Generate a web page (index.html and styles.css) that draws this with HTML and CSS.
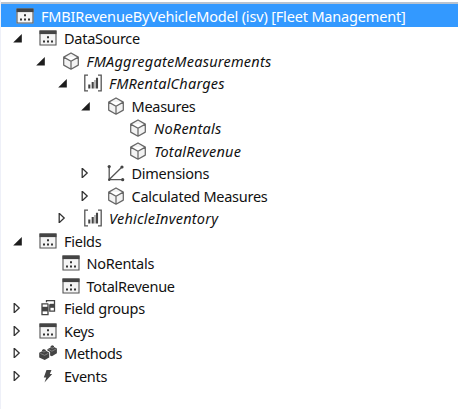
FILE: index.html
```
<!DOCTYPE html>
<html lang="en">
<head>
<meta charset="utf-8">
<title>FMBIRevenueByVehicleModel</title>
<link rel="stylesheet" href="styles.css">
</head>
<body>
<svg class="defs" aria-hidden="true">
  <symbol id="open" viewBox="0 0 10 10"><path d="M8.8 1V9.6H.2z" fill="#1d1d1d"/></symbol>
  <symbol id="closed" viewBox="0 0 10 10"><path d="M1.2 .3V9.7L6.2 5z" fill="#fff" stroke="#333" stroke-width="1.3"/></symbol>
  <symbol id="window" viewBox="0 0 18 18"><path d="M.5 1.5h17v15H.5z" fill="#f4f4f4"/><path d="M1 2h16v14H1z" fill="none" stroke="#555" stroke-width="1.1"/><path d="M.5 1.5h17v3.6H.5z" fill="#444"/><path d="M8 7.3h2v2H8zM4 11.5h2v2H4zM8 11.5h2v2H8zM12 11.5h2v2h-2z" fill="#333"/></symbol>
  <symbol id="cube" viewBox="0 0 18 18"><path d="M9 1l7.3 4.1v8L9 17.2l-7.3-4.1v-8zM1.7 5.1L9 9.2l7.3-4.1M9 9.2v8" fill="#f3f3f3" stroke="#666" stroke-width="1.25" stroke-linejoin="round"/></symbol>
  <symbol id="chart" viewBox="0 0 18 18"><path d="M4 1.2H.8v15.6H4M14 1.2h3.2v15.6H14" fill="none" stroke="#555" stroke-width="1.3"/><path d="M5.3 10.5v4M8.7 8v6.5M13 3.8v10.7" stroke="#444" stroke-width="2.1"/><path d="M11 6v8.5" stroke="#777" stroke-width="1"/></symbol>
  <symbol id="axes" viewBox="0 0 18 18"><path d="M2.2 2v13.7H16M2.5 15.3L15 3" fill="none" stroke="#555" stroke-width="1.3"/><g fill="#444"><circle cx="2.2" cy="2.6" r="1.6"/><circle cx="15" cy="3" r="1.6"/><circle cx="15.7" cy="15.7" r="1.6"/><circle cx="2.2" cy="15.7" r="1.2"/></g></symbol>
  <symbol id="groups" viewBox="0 0 18 18"><path d="M3 4.8h6v10.8H3z" fill="#fff" stroke="#444" stroke-width="1.3"/><path d="M3 7.8h6v4.6H3z" fill="#444"/><path d="M7.5 3.2V1.7h8v10.5h-4.7V5.2" fill="#fff" stroke="#444" stroke-width="1.3"/><path d="M11 4.8h4.5v4H11z" fill="#444"/></symbol>
  <symbol id="bricks" viewBox="0 0 18 18"><path d="M.2 8.8L3 7.2V6l1.8-.9 2 .8v.8l3.4 1.7v5L5.7 16 .2 13.6z" fill="#444"/><path d="M1.4 9.5l4.3 1.8 3.7-2M3.2 7.3l1.7.7 1.7-.7" fill="none" stroke="#aaa" stroke-width=".6"/><path d="M8.4 5.2L11.6 3.5V2.2l1.6-.9 1.8.8v1l2.9 1.4v4.8l-5 3-1.8-.7V8.1L8.4 6.5z" fill="#444"/><path d="M9.5 5.4l3.4 1.8 4-2.1M11.5 3.6l1.7.6 1.8-.8" fill="none" stroke="#aaa" stroke-width=".6"/></symbol>
  <symbol id="bolt" viewBox="0 0 18 18"><path d="M7.5 3h5l-1.7 4h2.4L5.5 15.5l1.8-5.1H4.8z" fill="#444"/></symbol>
</svg>
<main class="tree">
  <div class="row root"><svg class="icon"><use href="#window"/></svg><span class="label">FMBIRevenueByVehicleModel (isv) [Fleet Management]</span></div>
  <div class="row l1"><svg class="toggle"><use href="#open"/></svg><svg class="icon"><use href="#window"/></svg><span class="label">DataSource</span></div>
  <div class="row l2 ref"><svg class="toggle"><use href="#open"/></svg><svg class="icon"><use href="#cube"/></svg><span class="label">FMAggregateMeasurements</span></div>
  <div class="row l3 ref"><svg class="toggle"><use href="#open"/></svg><svg class="icon"><use href="#chart"/></svg><span class="label">FMRentalCharges</span></div>
  <div class="row l4"><svg class="toggle"><use href="#open"/></svg><svg class="icon"><use href="#cube"/></svg><span class="label">Measures</span></div>
  <div class="row l5 ref"><svg class="toggle"></svg><svg class="icon"><use href="#cube"/></svg><span class="label">NoRentals</span></div>
  <div class="row l5 ref"><svg class="toggle"></svg><svg class="icon"><use href="#cube"/></svg><span class="label">TotalRevenue</span></div>
  <div class="row l4"><svg class="toggle"><use href="#closed"/></svg><svg class="icon"><use href="#axes"/></svg><span class="label">Dimensions</span></div>
  <div class="row l4"><svg class="toggle"><use href="#closed"/></svg><svg class="icon"><use href="#cube"/></svg><span class="label">Calculated Measures</span></div>
  <div class="row l3 ref"><svg class="toggle"><use href="#closed"/></svg><svg class="icon"><use href="#chart"/></svg><span class="label">VehicleInventory</span></div>
  <div class="row l1"><svg class="toggle"><use href="#open"/></svg><svg class="icon"><use href="#window"/></svg><span class="label">Fields</span></div>
  <div class="row l2"><svg class="toggle"></svg><svg class="icon"><use href="#window"/></svg><span class="label">NoRentals</span></div>
  <div class="row l2"><svg class="toggle"></svg><svg class="icon"><use href="#window"/></svg><span class="label">TotalRevenue</span></div>
  <div class="row l1"><svg class="toggle"><use href="#closed"/></svg><svg class="icon"><use href="#groups"/></svg><span class="label">Field groups</span></div>
  <div class="row l1"><svg class="toggle"><use href="#closed"/></svg><svg class="icon"><use href="#window"/></svg><span class="label">Keys</span></div>
  <div class="row l1"><svg class="toggle"><use href="#closed"/></svg><svg class="icon"><use href="#bricks"/></svg><span class="label">Methods</span></div>
  <div class="row l1"><svg class="toggle"><use href="#closed"/></svg><svg class="icon"><use href="#bolt"/></svg><span class="label">Events</span></div>
</main>
</body>
</html>
```
FILE: styles.css
```
body {
  margin: 0;
  background: #fff;
  overflow: hidden;
}
.defs {
  display: none;
}
.tree {
  box-sizing: border-box;
  height: 409px;
  padding-top: 2px;
  border-left: 1px solid #eef0f8;
  font: 14.5px/22px "Noto Sans", "Open Sans", sans-serif;
  letter-spacing: -0.27px;
  color: #111;
}
.row {
  display: flex;
  align-items: center;
  height: 22.53px;
  white-space: nowrap;
}
.root {
  height: 23px;
  padding-left: 15px;
  border-top: 2px solid #b9c3cf;
  background: #3399ff;
  color: #fff;
  letter-spacing: -0.17px;
}
.l1 { padding-left: 12px; }
.l2 { padding-left: 34.5px; }
.l3 { padding-left: 57px; }
.l4 { padding-left: 79.5px; }
.l5 { padding-left: 102px; }
.toggle {
  width: 10px;
  height: 10px;
  margin-right: 16px;
  flex: none;
}
.icon {
  width: 18px;
  height: 18px;
  margin-right: 7px;
  flex: none;
}
.ref {
  font-style: italic;
  letter-spacing: 0.22px;
}
```
